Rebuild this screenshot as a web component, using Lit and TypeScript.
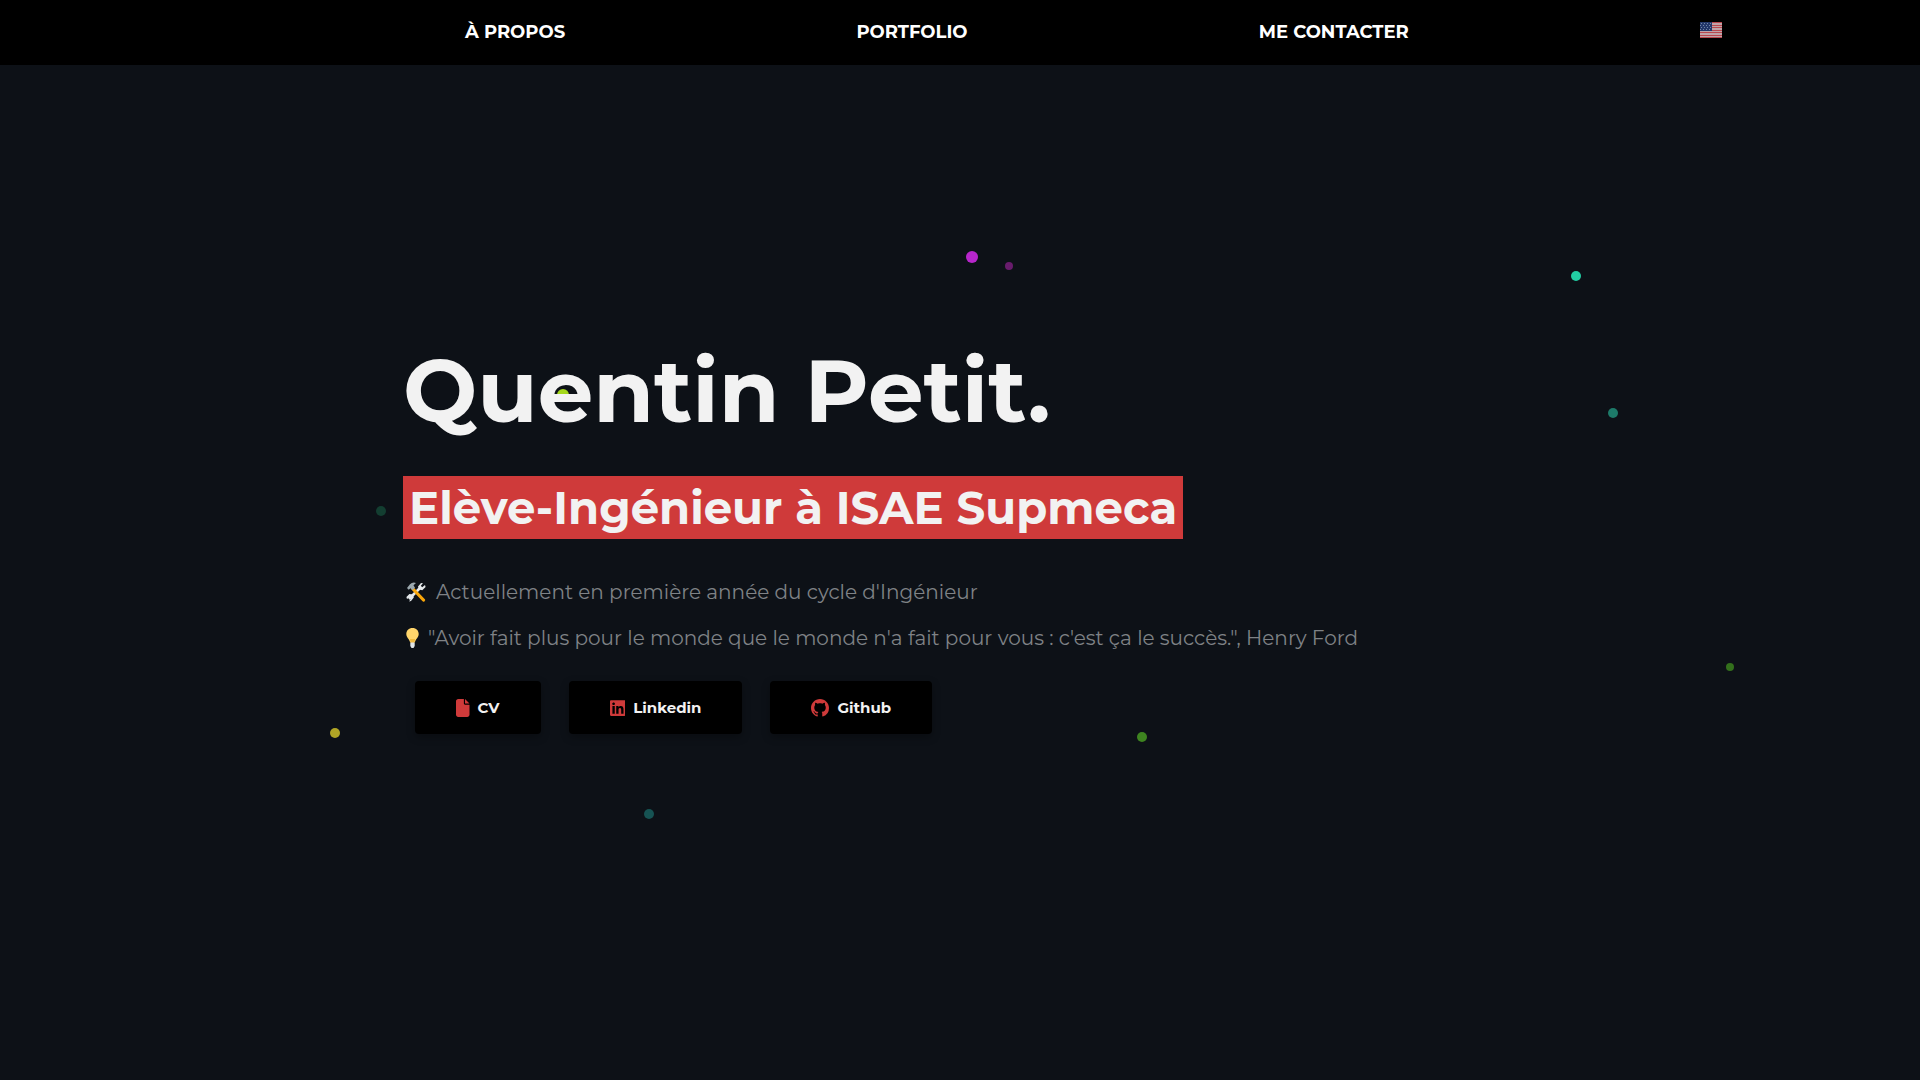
import { LitElement, html, svg, css } from "lit";
import { customElement } from "lit/decorators.js";

interface Particle {
  x: number;
  y: number;
  r: number;
  color: string;
}

const PARTICLES: Particle[] = [
  { x: 972, y: 257, r: 6, color: "#b726cb" },
  { x: 1009, y: 266, r: 4, color: "#681c6c" },
  { x: 1576, y: 276, r: 5, color: "#22cfa4" },
  { x: 1613, y: 413, r: 5, color: "#1d7a69" },
  { x: 563, y: 395, r: 6, color: "#a5d81c" },
  { x: 381, y: 511, r: 5, color: "#133e31" },
  { x: 335, y: 733, r: 5, color: "#b0a526" },
  { x: 649, y: 814, r: 5, color: "#165353" },
  { x: 1142, y: 737, r: 5, color: "#3e8420" },
  { x: 1730, y: 667, r: 4, color: "#33701c" },
];

const fileIcon = svg`<path fill="currentColor" d="M0 64C0 28.700 28.700 0 64 0H224V128c0 17.700 14.300 32 32 32H384V448c0 35.300-28.700 64-64 64H64c-35.300 0-64-28.700-64-64V64zM384 128H256V0L384 128z"/>`;
const linkedinIcon = svg`<path fill="currentColor" d="M416 32H31.900C14.300 32 0 46.500 0 64.300v383.400C0 465.500 14.300 480 31.900 480H416c17.600 0 32-14.500 32-32.300V64.300c0-17.800-14.400-32.300-32-32.300zM135.400 416H69V202.200h66.500V416zm-33.200-243c-21.300 0-38.500-17.300-38.500-38.500S80.900 96 102.200 96c21.200 0 38.500 17.300 38.500 38.500 0 21.300-17.200 38.500-38.500 38.500zm282.100 243h-66.400V312c0-24.800-.5-56.700-34.500-56.700-34.600 0-39.900 27-39.900 54.900V416h-66.400V202.200h63.700v29.200h.9c8.900-16.800 30.600-34.500 62.900-34.500 67.200 0 79.700 44.300 79.700 101.900V416z"/>`;
const githubIcon = svg`<path fill="currentColor" d="M8 0C3.580 0 0 3.580 0 8c0 3.540 2.290 6.530 5.470 7.590.4.070.55-.17.55-.38 0-.19-.01-.82-.01-1.490-2.010.37-2.530-.49-2.690-.94-.09-.23-.48-.94-.82-1.130-.28-.15-.68-.52-.01-.53.63-.01 1.080.58 1.230.82.72 1.210 1.870.87 2.330.66.070-.52.280-.87.510-1.070-1.780-.2-3.640-.89-3.640-3.950 0-.87.31-1.590.82-2.150-.08-.2-.36-1.020.080-2.120 0 0 .67-.21 2.200.82.64-.18 1.320-.27 2-.27s1.360.090 2 .27c1.530-1.040 2.200-.82 2.200-.82.44 1.100.160 1.920.080 2.120.51.56.82 1.270.82 2.150 0 3.070-1.870 3.750-3.650 3.950.29.250.54.730.54 1.480 0 1.070-.01 1.930-.01 2.200 0 .21.150.46.55.38A8.010 8.010 0 0 0 16 8c0-4.420-3.580-8-8-8z"/>`;

@customElement("app-root")
export class AppRoot extends LitElement {
  static styles = css`
    :host {
      display: block;
      position: relative;
      min-height: 100vh;
      overflow: hidden;
      background: #0d1117;
      color: #f2f2f2;
      font-family: Montserrat, Inter, "Liberation Sans", sans-serif;
    }
    .nav {
      position: relative;
      z-index: 2;
      background: #000;
    }
    .links {
      display: flex;
      justify-content: space-between;
      align-items: center;
      margin: 0;
      padding: 20px 198px 21px 465px;
      list-style: none;
    }
    .link {
      display: block;
      color: #fff;
      font-size: 18px;
      font-weight: 700;
      line-height: 24px;
      text-decoration: none;
    }
    .flag {
      display: block;
      width: 22px;
      height: 16px;
      margin-bottom: 4px;
    }
    .particles {
      position: absolute;
      inset: 0;
      z-index: 0;
      width: 100%;
      height: 100%;
    }
    .hero {
      position: relative;
      z-index: 1;
      padding: 273px 403px 0;
    }
    .name {
      margin: 0;
      font-size: 88px;
      font-weight: 700;
      line-height: 106px;
    }
    .role {
      display: table;
      margin: 32px 0 0;
      padding: 1px 6px 0;
      background: #cf3a3a;
      font-size: 45px;
      font-weight: 700;
      line-height: 62px;
    }
    .facts {
      margin: 30px 0 0;
      padding: 0;
      list-style: none;
      color: #7f8286;
      font-size: 20px;
      line-height: 46px;
    }
    .fact {
      display: flex;
      align-items: center;
    }
    .tools {
      width: 20px;
      height: 20px;
      margin: 0 10px 0 3px;
    }
    .bulb {
      width: 13px;
      height: 20px;
      margin: 0 9px 0 3px;
    }
    .actions {
      display: flex;
      gap: 28px;
      margin: 20px 12px 0;
    }
    .button {
      display: flex;
      align-items: center;
      gap: 8px;
      padding: 0 41px;
      border-radius: 4px;
      background: #000;
      box-shadow: 0 3px 8px rgba(0, 0, 0, 0.3);
      color: #f2f2f2;
      font-size: 15px;
      font-weight: 700;
      line-height: 53px;
      text-decoration: none;
    }
    .icon {
      display: block;
      height: 18px;
      color: #cf3a3a;
    }
  `;

  private renderFlag() {
    return html`<svg class="flag" viewBox="0 0 22 16" aria-hidden="true">
      <rect width="22" height="16" fill="#c0a3a8" />
      ${[0, 3, 5, 8, 10, 13, 15].map(
        (y) => svg`<rect y=${y} width="22" height="1" fill="#b9484f" />`
      )}
      <rect width="12" height="9" fill="#23376a" />
      ${[1, 3, 5, 7].map((y, row) =>
        [1, 4, 7, 10].map(
          (x) => svg`<rect x=${x - (row % 2)} y=${y} width="1" height="1" fill="#7184a6" />`
        )
      )}
    </svg>`;
  }

  private renderTools() {
    return html`<svg class="tools" viewBox="0 0 20 20" aria-hidden="true">
      <path d="M3 17 14 6" stroke="#e4e8ea" stroke-width="2.600" />
      <path d="M13 7.500 12 4.500 15 1l2 .3-2.200 2.500 1.400 1.400L19 3l.6 2-3.300 3.200zM7 12.500l.8 3L5 19l-2 .6 1.700-2.700-1.500-1.400L1 17l-.6-2 3-3z" fill="#e4e8ea" />
      <path d="M7 7 17.500 18" stroke="#f9a60a" stroke-width="3.200" stroke-linecap="round" />
      <path d="M1 6 4 2.200Q6.500-.2 10 1L7.500 3.200 9 5.700 6.500 8.200 4.500 6.200 2.700 7.800z" fill="#9ba8ae" />
    </svg>`;
  }

  private renderBulb() {
    return html`<svg class="bulb" viewBox="0 0 13 20" aria-hidden="true">
      <path d="M6.500 0C2.800 0 .3 2.600.3 6c0 3.500 3 5 3.700 8h5c.7-3 3.700-4.500 3.700-8 0-3.400-2.500-6-6.200-6z" fill="#ffd56b" />
      <path d="M4 11h5l-.5 4h-4z" fill="#efb83d" />
      <path d="M4.300 14.500h4.400V18L7.500 20h-2L4.300 18z" fill="#dfe5e8" />
    </svg>`;
  }

  render() {
    return html`
      <svg class="particles" aria-hidden="true">
        ${PARTICLES.map((p) => svg`<circle cx=${p.x} cy=${p.y} r=${p.r} fill=${p.color} />`)}
      </svg>
      <nav class="nav">
        <ul class="links">
          <li><a class="link" href="#about">À PROPOS</a></li>
          <li><a class="link" href="#portfolio">PORTFOLIO</a></li>
          <li><a class="link" href="#contact">ME CONTACTER</a></li>
          <li><a class="link" href="#en" aria-label="English">${this.renderFlag()}</a></li>
        </ul>
      </nav>
      <main class="hero">
        <h1 class="name">Quentin Petit.</h1>
        <h2 class="role">Elève-Ingénieur à ISAE Supmeca</h2>
        <ul class="facts">
          <li class="fact">${this.renderTools()}Actuellement en première année du cycle d'Ingénieur</li>
          <li class="fact">
            ${this.renderBulb()}"Avoir fait plus pour le monde que le monde n'a fait pour vous : c'est ça le succès.", Henry Ford
          </li>
        </ul>
        <div class="actions">
          <a class="button" href="#cv"><svg class="icon" viewBox="0 0 384 512" aria-hidden="true">${fileIcon}</svg>CV</a>
          <a class="button" href="#linkedin"><svg class="icon" viewBox="0 0 448 512" aria-hidden="true">${linkedinIcon}</svg>Linkedin</a>
          <a class="button" href="#github"><svg class="icon" viewBox="0 0 16 16" aria-hidden="true">${githubIcon}</svg>Github</a>
        </div>
      </main>
    `;
  }
}
